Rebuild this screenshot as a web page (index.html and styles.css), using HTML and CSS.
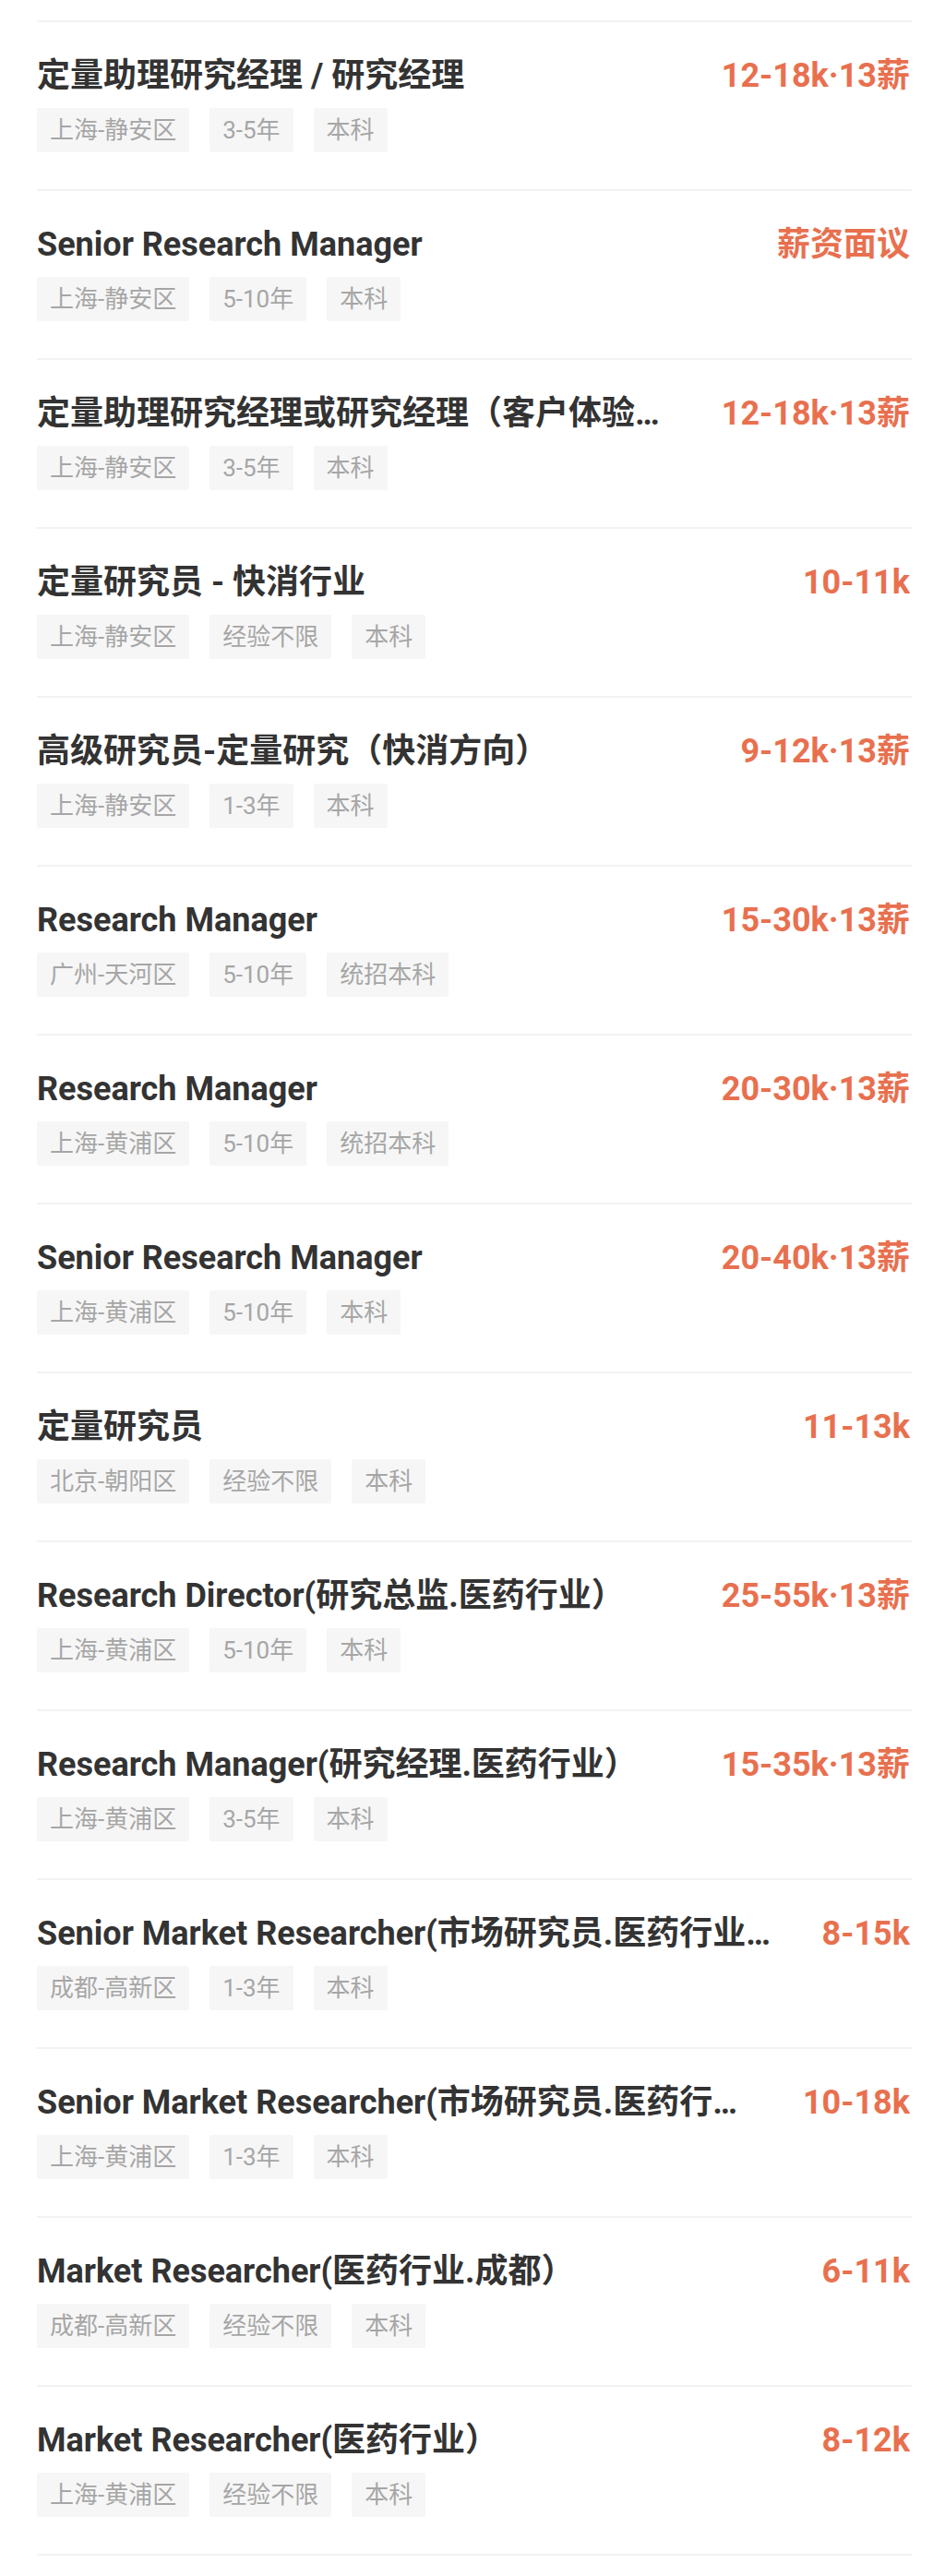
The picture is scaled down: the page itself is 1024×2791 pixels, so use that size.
FILE: index.html
```html
<!DOCTYPE html>
<html lang="zh-CN">

<head>
    <meta charset="UTF-8">
    <meta name="viewport" content="width=device-width, initial-scale=1.0">
    <title>职位列表</title>
    <link rel="stylesheet" href="styles.css">
</head>

<body>
    <ul class="job-list">
        <li class="job">
            <div class="job-head">
                <span class="job-title">定量助理研究经理 / 研究经理</span>
                <span class="job-salary">12-18k·13薪</span>
            </div>
            <div class="job-tags">
                <span class="tag">上海-静安区</span>
                <span class="tag">3-5年</span>
                <span class="tag">本科</span>
            </div>
        </li>
        <li class="job">
            <div class="job-head">
                <span class="job-title">Senior Research Manager</span>
                <span class="job-salary">薪资面议</span>
            </div>
            <div class="job-tags">
                <span class="tag">上海-静安区</span>
                <span class="tag">5-10年</span>
                <span class="tag">本科</span>
            </div>
        </li>
        <li class="job">
            <div class="job-head">
                <span class="job-title">定量助理研究经理或研究经理（客户体验…</span>
                <span class="job-salary">12-18k·13薪</span>
            </div>
            <div class="job-tags">
                <span class="tag">上海-静安区</span>
                <span class="tag">3-5年</span>
                <span class="tag">本科</span>
            </div>
        </li>
        <li class="job">
            <div class="job-head">
                <span class="job-title">定量研究员 - 快消行业</span>
                <span class="job-salary">10-11k</span>
            </div>
            <div class="job-tags">
                <span class="tag">上海-静安区</span>
                <span class="tag">经验不限</span>
                <span class="tag">本科</span>
            </div>
        </li>
        <li class="job">
            <div class="job-head">
                <span class="job-title">高级研究员-定量研究（快消方向）</span>
                <span class="job-salary">9-12k·13薪</span>
            </div>
            <div class="job-tags">
                <span class="tag">上海-静安区</span>
                <span class="tag">1-3年</span>
                <span class="tag">本科</span>
            </div>
        </li>
        <li class="job">
            <div class="job-head">
                <span class="job-title">Research Manager</span>
                <span class="job-salary">15-30k·13薪</span>
            </div>
            <div class="job-tags">
                <span class="tag">广州-天河区</span>
                <span class="tag">5-10年</span>
                <span class="tag">统招本科</span>
            </div>
        </li>
        <li class="job">
            <div class="job-head">
                <span class="job-title">Research Manager</span>
                <span class="job-salary">20-30k·13薪</span>
            </div>
            <div class="job-tags">
                <span class="tag">上海-黄浦区</span>
                <span class="tag">5-10年</span>
                <span class="tag">统招本科</span>
            </div>
        </li>
        <li class="job">
            <div class="job-head">
                <span class="job-title">Senior Research Manager</span>
                <span class="job-salary">20-40k·13薪</span>
            </div>
            <div class="job-tags">
                <span class="tag">上海-黄浦区</span>
                <span class="tag">5-10年</span>
                <span class="tag">本科</span>
            </div>
        </li>
        <li class="job">
            <div class="job-head">
                <span class="job-title">定量研究员</span>
                <span class="job-salary">11-13k</span>
            </div>
            <div class="job-tags">
                <span class="tag">北京-朝阳区</span>
                <span class="tag">经验不限</span>
                <span class="tag">本科</span>
            </div>
        </li>
        <li class="job">
            <div class="job-head">
                <span class="job-title">Research Director(研究总监.医药行业）</span>
                <span class="job-salary">25-55k·13薪</span>
            </div>
            <div class="job-tags">
                <span class="tag">上海-黄浦区</span>
                <span class="tag">5-10年</span>
                <span class="tag">本科</span>
            </div>
        </li>
        <li class="job">
            <div class="job-head">
                <span class="job-title">Research Manager(研究经理.医药行业）</span>
                <span class="job-salary">15-35k·13薪</span>
            </div>
            <div class="job-tags">
                <span class="tag">上海-黄浦区</span>
                <span class="tag">3-5年</span>
                <span class="tag">本科</span>
            </div>
        </li>
        <li class="job">
            <div class="job-head">
                <span class="job-title">Senior Market Researcher(市场研究员.医药行业…</span>
                <span class="job-salary">8-15k</span>
            </div>
            <div class="job-tags">
                <span class="tag">成都-高新区</span>
                <span class="tag">1-3年</span>
                <span class="tag">本科</span>
            </div>
        </li>
        <li class="job">
            <div class="job-head">
                <span class="job-title">Senior Market Researcher(市场研究员.医药行…</span>
                <span class="job-salary">10-18k</span>
            </div>
            <div class="job-tags">
                <span class="tag">上海-黄浦区</span>
                <span class="tag">1-3年</span>
                <span class="tag">本科</span>
            </div>
        </li>
        <li class="job">
            <div class="job-head">
                <span class="job-title">Market Researcher(医药行业.成都）</span>
                <span class="job-salary">6-11k</span>
            </div>
            <div class="job-tags">
                <span class="tag">成都-高新区</span>
                <span class="tag">经验不限</span>
                <span class="tag">本科</span>
            </div>
        </li>
        <li class="job">
            <div class="job-head">
                <span class="job-title">Market Researcher(医药行业）</span>
                <span class="job-salary">8-12k</span>
            </div>
            <div class="job-tags">
                <span class="tag">上海-黄浦区</span>
                <span class="tag">经验不限</span>
                <span class="tag">本科</span>
            </div>
        </li>
    </ul>
</body>

</html>
```

FILE: styles.css
```css
body {
    font-family: 'Roboto', 'Noto Sans CJK SC', sans-serif;
    background-color: #fff;
    margin: 0;
    padding: 0;
}

.job-list {
    list-style: none;
    margin: 0;
    padding: 22px 36px 0 40px;
}

.job {
    border-top: 2px solid #f2f2f2;
    padding: 33px 0 40px;
}

.job:last-child {
    border-bottom: 2px solid #f2f2f2;
}

.job-head {
    display: flex;
    justify-content: space-between;
    align-items: center;
    height: 50px;
}

.job-title {
    font-size: 36px;
    line-height: 50px;
    font-weight: bold;
    color: #333;
    white-space: nowrap;
    overflow: hidden;
    min-width: 0;
}

.job-salary {
    font-size: 36px;
    line-height: 50px;
    font-weight: bold;
    color: #e8704f;
    white-space: nowrap;
    margin-left: 30px;
    margin-right: 2px;
}

.job-tags {
    display: flex;
    gap: 22px;
    margin-top: 10px;
}

.tag {
    height: 48px;
    line-height: 48px;
    padding: 0 14px;
    font-size: 26px;
    color: #a6a6a6;
    background-color: #f6f6f6;
    border-radius: 2px;
}
```
